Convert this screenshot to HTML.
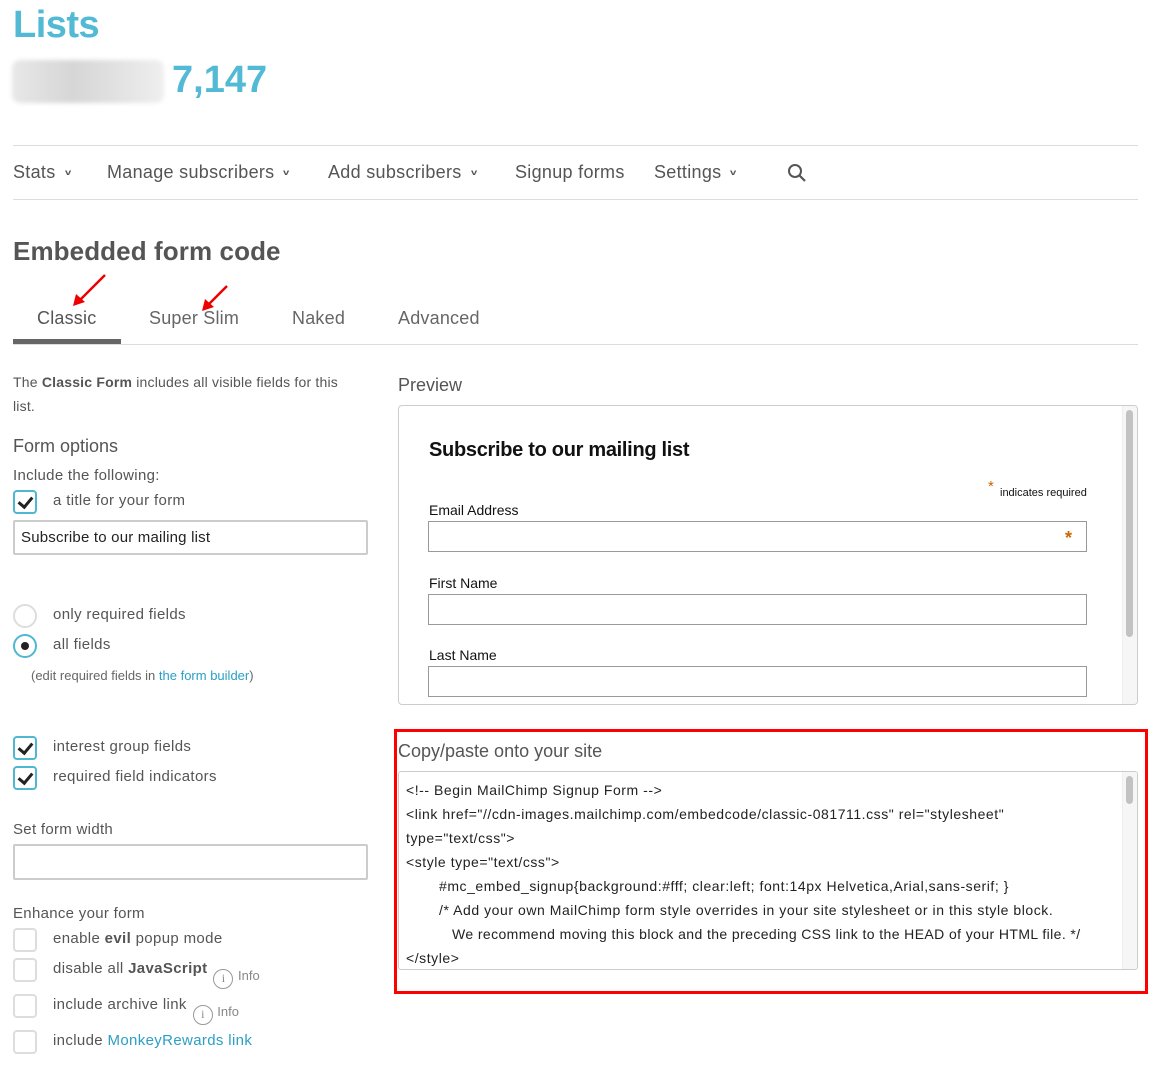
<!DOCTYPE html>
<html><head><meta charset="utf-8"><style>
*{margin:0;padding:0;box-sizing:border-box}
body{width:1157px;height:1072px;background:#fff;font-family:"Liberation Sans",Arial,sans-serif;color:#555;position:relative;overflow:hidden}
.a{position:absolute;white-space:nowrap}
.hr{position:absolute;left:13px;width:1125px;height:1px;background:#ddd}
.nav{font-size:18px;color:#555;top:162px;letter-spacing:0.3px}
.cv{font-size:8px;font-weight:bold;display:inline-block;transform:scaleX(1.4);margin-left:10px;vertical-align:3px}
.tab{font-size:18px;color:#666;top:308px;letter-spacing:0.2px}
.cb{position:absolute;left:13px;width:24px;height:24px;border:2px solid #ddd;border-radius:4px;background:#fff}
.cb.on{border-color:#4fb8d1}
.cb.on:after{content:"";position:absolute;left:6px;top:2px;width:6px;height:11px;border:solid #222;border-width:0 3px 3px 0;transform:rotate(40deg)}
.lb{font-size:15px;color:#555;left:53px;letter-spacing:0.35px}
.rd{position:absolute;left:13px;width:24px;height:24px;border:2px solid #ddd;border-radius:50%}
.inp{position:absolute;border:2px solid #ccc;border-radius:2px;background:#fff}
.info{display:inline-block;width:20px;height:20px;border:1.5px solid #999;border-radius:50%;font-size:12px;text-align:center;line-height:17px;color:#888;vertical-align:-9px;margin-left:6px;font-family:"Liberation Serif",serif;letter-spacing:0}
.it{font-size:13px;color:#888;vertical-align:-7px;letter-spacing:0}
.pf{position:absolute;left:428px;width:659px;height:31px;border:1px solid #999;background:#fff}
.pl{font-size:14px;color:#111;left:429px}
.code{font-size:14px;color:#222;left:406px;letter-spacing:0.55px}
</style></head><body>
<div class="a" style="left:13px;top:4px;font-size:38px;font-weight:bold;color:#52bad5;letter-spacing:-0.5px">Lists</div>
<div class="a" style="left:12px;top:60px;width:152px;height:43px;border-radius:8px;background:linear-gradient(90deg,#e8e8e8,#d6d6d6 40%,#e2e2e2 70%,#efefef);filter:blur(2px)"></div>
<div class="a" style="left:172px;top:59px;font-size:38px;font-weight:bold;color:#52bad5">7,147</div>
<div class="hr" style="top:145px"></div>
<div class="hr" style="top:199px"></div>
<div class="a nav" style="left:13px">Stats<span class="cv">v</span></div>
<div class="a nav" style="left:107px">Manage subscribers<span class="cv">v</span></div>
<div class="a nav" style="left:328px">Add subscribers<span class="cv">v</span></div>
<div class="a nav" style="left:515px">Signup forms</div>
<div class="a nav" style="left:654px">Settings<span class="cv">v</span></div>
<svg class="a" style="left:787px;top:163px" width="20" height="20"><circle cx="8" cy="8" r="6" fill="none" stroke="#555" stroke-width="2"/><line x1="12.5" y1="12.5" x2="18" y2="18" stroke="#555" stroke-width="2.2"/></svg>
<div class="a" style="left:13px;top:236px;font-size:26px;font-weight:bold;color:#555;letter-spacing:0.1px">Embedded form code</div>
<div class="a tab" style="left:37px;color:#555">Classic</div>
<div class="a tab" style="left:149px">Super Slim</div>
<div class="a tab" style="left:292px">Naked</div>
<div class="a tab" style="left:398px">Advanced</div>
<div class="a" style="left:13px;top:339px;width:108px;height:5px;background:#666"></div>
<div class="hr" style="top:344px"></div>
<svg class="a" style="left:70px;top:272px" width="160" height="40"><line x1="35" y1="3" x2="8" y2="30" stroke="#e00" stroke-width="2.5"/><polygon points="3,34 6,22 15,30" fill="#e00"/><line x1="157" y1="14" x2="138" y2="33" stroke="#e00" stroke-width="2.5"/><polygon points="132,39 135,27 144,35" fill="#e00"/></svg>
<div class="a" style="left:13px;top:370px;font-size:14px;color:#555;line-height:24px;white-space:normal;width:345px;letter-spacing:0.2px">The <b>Classic Form</b> includes all visible fields for this list.</div>
<div class="a" style="left:13px;top:436px;font-size:18px;color:#555">Form options</div>
<div class="a" style="left:13px;top:467px;font-size:15px;color:#555;letter-spacing:0.3px">Include the following:</div>
<div class="cb on" style="top:490px"></div><div class="a lb" style="top:492px">a title for your form</div>
<div class="inp" style="left:13px;top:520px;width:355px;height:35px"></div>
<div class="a" style="left:21px;top:529px;font-size:15px;color:#222;letter-spacing:0.2px">Subscribe to our mailing list</div>
<div class="rd" style="top:604px"></div><div class="a lb" style="top:606px">only required fields</div>
<div class="rd" style="top:634px;border-color:#4fb8d1"><div style="position:absolute;left:6px;top:6px;width:8px;height:8px;border-radius:50%;background:#222"></div></div><div class="a lb" style="top:636px">all fields</div>
<div class="a" style="left:31px;top:668px;font-size:13px;color:#666">(edit required fields in <span style="color:#2b9fc4">the form builder</span>)</div>
<div class="cb on" style="top:736px"></div><div class="a lb" style="top:738px">interest group fields</div>
<div class="cb on" style="top:766px"></div><div class="a lb" style="top:768px">required field indicators</div>
<div class="a" style="left:13px;top:821px;font-size:15px;color:#555;letter-spacing:0.3px">Set form width</div>
<div class="inp" style="left:13px;top:844px;width:355px;height:36px"></div>
<div class="a" style="left:13px;top:905px;font-size:15px;color:#555;letter-spacing:0.3px">Enhance your form</div>
<div class="cb" style="top:928px"></div><div class="a lb" style="top:930px">enable <b>evil</b> popup mode</div>
<div class="cb" style="top:958px"></div><div class="a lb" style="top:960px">disable all <b>JavaScript</b><span class="info">i</span> <span class="it">Info</span></div>
<div class="cb" style="top:994px"></div><div class="a lb" style="top:996px">include archive link<span class="info">i</span> <span class="it">Info</span></div>
<div class="cb" style="top:1030px"></div><div class="a lb" style="top:1032px">include <span style="color:#2b9fc4">MonkeyRewards link</span></div>
<div class="a" style="left:398px;top:375px;font-size:18px;color:#555">Preview</div>
<div class="a" style="left:398px;top:405px;width:740px;height:300px;border:1px solid #ccc;border-radius:4px;overflow:hidden">
 <div class="a" style="right:0;top:0;width:15px;height:300px;background:#f6f6f6;border-left:1px solid #eee"></div>
 <div class="a" style="right:4px;top:4px;width:7px;height:227px;background:#c2c2c2;border-radius:4px"></div>
</div>
<div class="a" style="left:429px;top:439px;font-size:20px;font-weight:bold;color:#111;letter-spacing:-0.3px">Subscribe to our mailing list</div>
<div class="a" style="left:988px;top:478px;font-size:15px;color:#c60">*</div>
<div class="a" style="left:1000px;top:487px;font-size:11px;color:#111">indicates required</div>
<div class="a pl" style="top:502px">Email Address</div>
<div class="pf" style="top:521px"></div>
<div class="a" style="left:1065px;top:528px;font-size:18px;color:#c60;font-weight:bold">*</div>
<div class="a pl" style="top:575px">First Name</div>
<div class="pf" style="top:594px"></div>
<div class="a pl" style="top:647px">Last Name</div>
<div class="pf" style="top:666px"></div>
<div class="a" style="left:394px;top:729px;width:754px;height:265px;border:3px solid #f00"></div>
<div class="a" style="left:398px;top:741px;font-size:18px;color:#555">Copy/paste onto your site</div>
<div class="a" style="left:398px;top:771px;width:740px;height:199px;border:1px solid #ccc;border-radius:3px;overflow:hidden">
 <div class="a" style="right:0;top:0;width:15px;height:199px;background:#f6f6f6;border-left:1px solid #eee"></div>
 <div class="a" style="right:4px;top:4px;width:7px;height:28px;background:#c2c2c2;border-radius:4px"></div>
</div>
<div class="a code" style="top:782px">&lt;!-- Begin MailChimp Signup Form --&gt;</div>
<div class="a code" style="top:806px">&lt;link href="//cdn-images.mailchimp.com/embedcode/classic-081711.css" rel="stylesheet"</div>
<div class="a code" style="top:830px">type="text/css"&gt;</div>
<div class="a code" style="top:854px">&lt;style type="text/css"&gt;</div>
<div class="a code" style="top:878px;left:439px">#mc_embed_signup{background:#fff; clear:left; font:14px Helvetica,Arial,sans-serif; }</div>
<div class="a code" style="top:902px;left:439px">/* Add your own MailChimp form style overrides in your site stylesheet or in this style block.</div>
<div class="a code" style="top:926px;left:452px;letter-spacing:0.4px">We recommend moving this block and the preceding CSS link to the HEAD of your HTML file. */</div>
<div class="a code" style="top:950px">&lt;/style&gt;</div>
</body></html>
